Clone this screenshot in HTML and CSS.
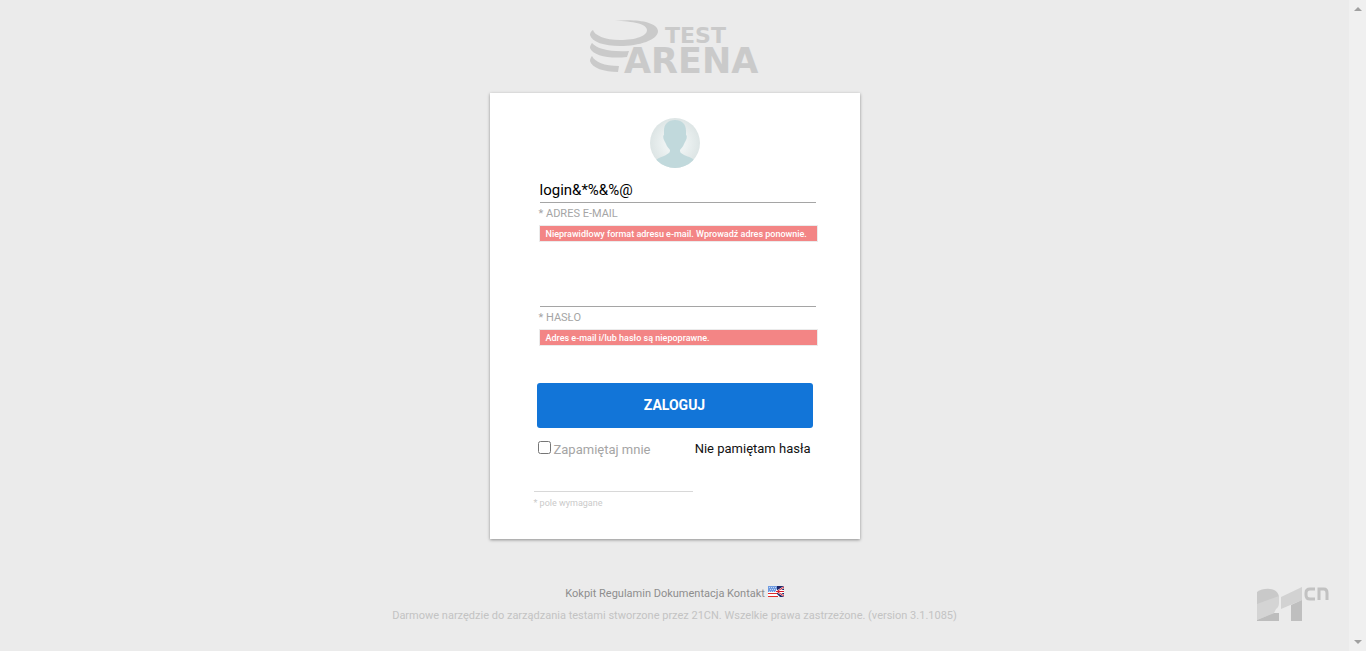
FILE: index.html
```html
<!DOCTYPE html>
<html lang="pl">
<head>
<meta charset="utf-8">
<meta name="viewport" content="width=device-width, initial-scale=1">
<title>TestArena</title>
<link rel="stylesheet" href="styles.css">
</head>
<body>
<div class="page">
  <header class="brand">
    <svg class="brand-logo" viewBox="0 0 170 54" role="img" aria-label="Test Arena">
      <path d="M25 1C43-1 67 1 68 11C68 20 49 26 30 26C14 26 2 22 0 15C0 13 1 11 3 10C4 15 15 20 30 20C46 20 57 16 57 10C57 4 43 1 25 1Z"/>
      <path d="M2 23C7 29 20 32 39 31L37 37C20 39 3 36 0 28C0 26 1 24 2 23Z"/>
      <path d="M2 36C5 42 14 46 29 46L28 52C14 52 2 48 0 41C0 39 1 37 2 36Z"/>
      <text class="logo-test" x="75" y="23">TEST</text>
      <text class="logo-arena" x="34" y="53">ARENA</text>
    </svg>
  </header>
  <main class="card">
    <svg class="avatar" viewBox="0 0 50 50" aria-hidden="true">
      <defs>
        <radialGradient id="disc"><stop offset="0.4" stop-color="#eef3f3"/><stop offset="1" stop-color="#dde5e5"/></radialGradient>
        <clipPath id="round"><circle cx="25" cy="25" r="25"/></clipPath>
      </defs>
      <circle cx="25" cy="25" r="25" fill="url(#disc)"/>
      <path clip-path="url(#round)" fill="#c1d9dc" d="M25 2C32 2 36 6 36 13L36 17C37 17 37 20 36 22C35 24 35 24 34 26C33 29 31 30 30 32C30 35 31 35 34 37C39 39 43 40 46 44L46 50L4 50L4 44C7 40 12 39 16 37C19 35 20 35 20 32C19 30 17 29 16 26C15 24 15 24 14 22C13 20 13 17 14 17L14 13C14 6 18 2 25 2Z"/>
    </svg>
    <form class="login">
      <div class="field">
        <input class="field-input" id="email" type="text" value="login&amp;*%&amp;%@">
        <label class="field-label" for="email">* ADRES E-MAIL</label>
        <p class="field-error">Nieprawidłowy format adresu e-mail. Wprowadź adres ponownie.</p>
      </div>
      <div class="field">
        <input class="field-input" id="password" type="password">
        <label class="field-label" for="password">* HASŁO</label>
        <p class="field-error">Adres e-mail i/lub hasło są niepoprawne.</p>
      </div>
      <button class="submit" type="submit">ZALOGUJ</button>
      <div class="options">
        <div class="remember">
          <input class="remember-box" id="remember" type="checkbox">
          <label class="remember-label" for="remember">Zapamiętaj mnie</label>
        </div>
        <a class="forgot" href="#">Nie pamiętam hasła</a>
      </div>
      <p class="required">* pole wymagane</p>
    </form>
  </main>
  <footer class="footer">
    <nav class="links">
      <a href="#">Kokpit</a> <a href="#">Regulamin</a> <a href="#">Dokumentacja</a> <a href="#">Kontakt</a>
      <a href="#" aria-label="English"><svg class="flag" viewBox="0 0 16 11" aria-hidden="true">
        <path fill="#fff" d="M0 0H16V11H0Z"/>
        <path stroke="#e02c2c" d="M0 7.5H10M0 10.5H10"/>
        <path fill="#6f9be0" d="M0 0H9V6H0Z"/>
        <path stroke="#c4d8f8" stroke-dasharray="1 1" d="M1 1.5H9M2 3.5H9M1 5.5H9"/>
        <path fill="#1f2668" d="M9 0H16V11H12L9 8Z"/>
        <path stroke="#fff" stroke-width="2" d="M9 5.5L16 1M9 5.5L16 10"/>
        <path stroke="#fff" stroke-width="3" d="M8 5.5H16"/>
        <path stroke="#d8202e" d="M9 5.5L16 1M9 5.5L16 10"/>
        <path stroke="#d8202e" d="M8 5.5H16"/>
      </svg></a>
    </nav>
    <p class="legal">Darmowe narzędzie do zarządzania testami stworzone przez 21CN. Wszelkie prawa zastrzeżone. (version 3.1.1085)</p>
  </footer>
  <a class="vendor" href="#" aria-label="21CN">
    <svg class="vendor-logo" viewBox="0 0 73 36" aria-hidden="true">
      <path fill="#c9c9c9" d="M0 6C7 1 22 1 22 12L0 19Z"/>
      <path fill="#d4d4d4" d="M0 18L22 10V17Q22 21 19 23L17 27L0 34Z"/>
      <path fill="#bdbdbd" d="M0 34L17 27H22V35H0Z"/>
      <path fill="#d2d2d2" d="M24 11L45 1V14L24 23Z"/>
      <path fill="#bfbfbf" d="M34 19L45 14V35H34Z"/>
      <path fill="none" stroke="#c2c2c2" stroke-width="3" d="M58 3H53Q49 3 49 7V9Q49 13 53 13H58M62 14V3H67Q70 3 70 7V14"/>
    </svg>
  </a>
</div>
<div class="scroll-track" aria-hidden="true">
  <svg class="arrow" viewBox="0 0 8 4"><path d="M4 0L8 4H0Z"/></svg>
  <svg class="arrow" viewBox="0 0 8 4"><path d="M0 0H8L4 4Z"/></svg>
</div>
</body>
</html>
```
FILE: styles.css
```css
* { box-sizing: border-box; }
body {
  margin: 0;
  min-height: 100vh;
  display: flex;
  background: #ebebeb;
  font-family: Roboto, "Liberation Sans", sans-serif;
  font-size: 11px;
}
p { margin: 0; }
a { color: inherit; text-decoration: none; }
.page {
  position: relative;
  flex: 1;
  display: flex;
  flex-direction: column;
  align-items: center;
  padding: 20px 16px 23px;
}
.brand { margin-bottom: 19px; }
.brand-logo { display: block; width: 170px; height: 54px; fill: #cacaca; overflow: visible; }
.logo-test { font: 700 22px "DejaVu Sans", sans-serif; }
.logo-arena { font: 700 35px "DejaVu Sans", sans-serif; }
.card {
  width: 100%;
  max-width: 370px;
  padding: 25px 47px;
  background: #fff;
  box-shadow: 0 1px 3px rgba(0, 0, 0, 0.4);
}
.avatar { display: block; width: 50px; height: 50px; margin: 0 auto 10px; }
.login { display: flex; flex-direction: column; }
.field { display: flex; flex-direction: column; margin: 0 -5px 40px 2px; }
.field + .field { margin-bottom: 37px; }
.field-input {
  height: 25px;
  margin: 0 2px 0 1px;
  padding: 0;
  border: 0;
  border-bottom: 1px solid #a5a5a5;
  outline: 0;
  background: transparent;
  color: #000;
  font: 15px Roboto, sans-serif;
}
.field-label { line-height: 22px; color: #a5a5a5; }
.field-error {
  padding: 2px 5px 0 6px;
  border: 1px solid #ebebeb;
  background: #f38585;
  color: #fff;
  font-size: 9px;
  font-weight: 500;
  line-height: 13px;
}
.submit {
  height: 45px;
  padding: 0 0 2px;
  border: 0;
  border-radius: 3px;
  background: #1275d8;
  color: #fff;
  font: 700 14px Roboto, sans-serif;
}
.options {
  display: flex;
  justify-content: space-between;
  margin-top: 11px;
  padding: 0 2px 0 1px;
  font-size: 13px;
  line-height: 20px;
}
.remember { display: flex; align-items: flex-start; gap: 3px; color: #a5a5a5; }
.remember-box { width: 13px; height: 13px; margin: 2px 0 0; }
.remember-label { padding-top: 1px; }
.forgot { color: #111; }
.required {
  width: 159px;
  margin: 31px 0 0 -3px;
  border-top: 1px solid #d8d8d8;
  color: #cacaca;
  font-size: 9px;
  line-height: 22px;
}
.footer { margin-top: 45px; text-align: center; line-height: 20px; }
.links { color: #8e8e8e; }
.flag { width: 16px; height: 11px; }
.legal { margin-top: 2px; color: #c3c3c3; }
.vendor { position: absolute; right: 19px; bottom: 29px; }
.vendor-logo { display: block; width: 73px; height: 36px; }
.scroll-track {
  width: 17px;
  display: flex;
  flex-direction: column;
  justify-content: space-between;
  align-items: center;
  padding: 7px 0;
  background: #f0f0f0;
}
.arrow { width: 8px; height: 4px; fill: #a0a0a0; }
```
